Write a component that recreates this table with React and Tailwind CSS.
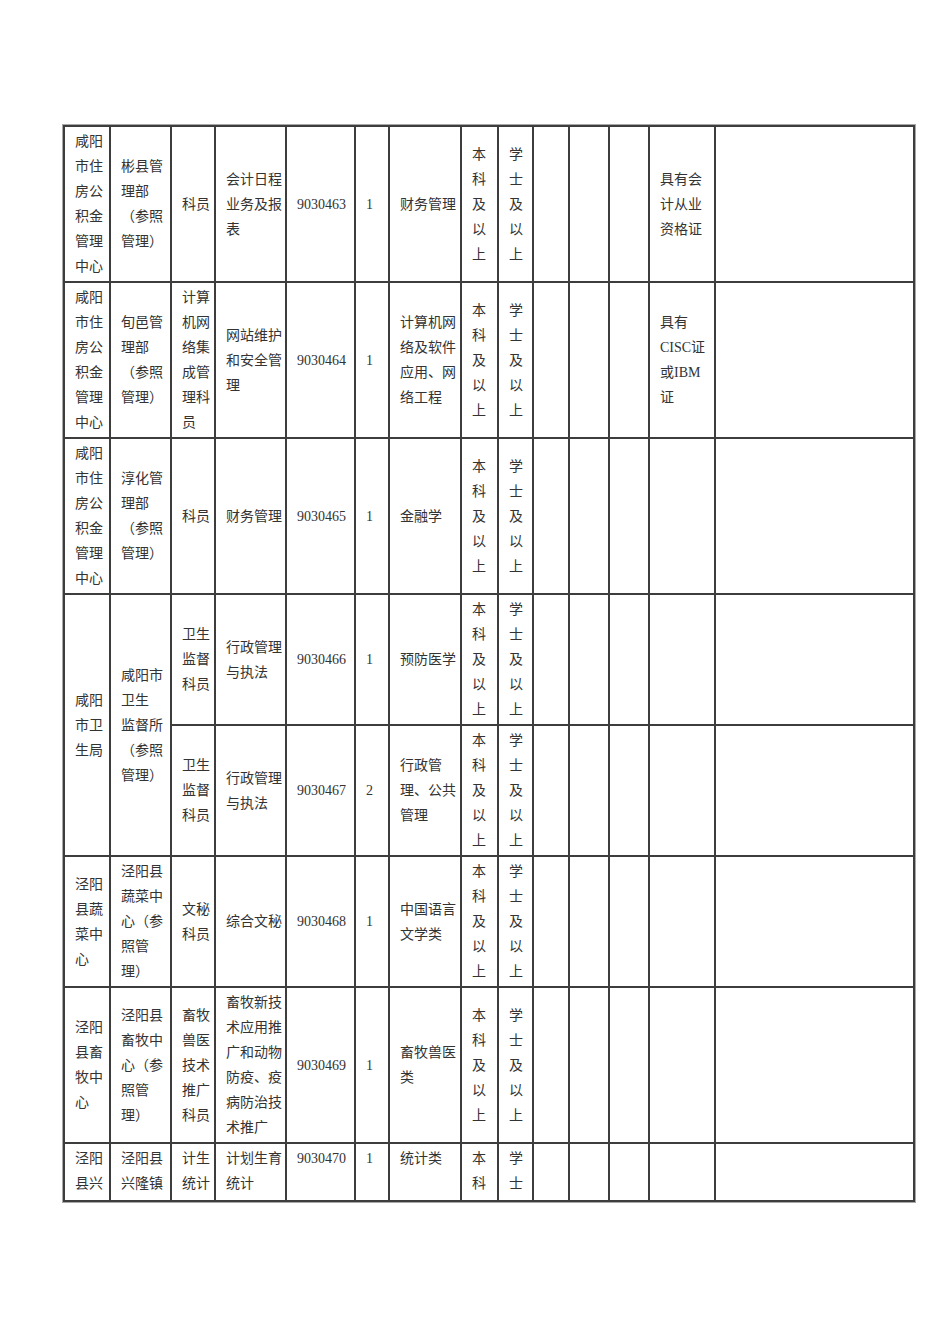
import React from 'react';

const cols = [46, 61, 44, 71, 69, 34, 72, 37, 35, 36, 40, 40, 66, 199];

const rows = [
  { org: '咸阳市住房公积金管理中心', unit: '彬县管理部（参照管理）', post: '科员', duty: '会计日程业务及报表', code: '9030463', num: '1', major: '财务管理', note: '具有会计从业资格证' },
  {
    org: '咸阳市住房公积金管理中心', unit: '旬邑管理部（参照管理）', post: '计算机网络集成管理科员', duty: '网站维护和安全管理', code: '9030464', num: '1', major: '计算机网络及软件应用、网络工程',
    note: (
      <>
        具有<br />CISC证<br />或IBM<br />证
      </>
    ),
  },
  { org: '咸阳市住房公积金管理中心', unit: '淳化管理部（参照管理）', post: '科员', duty: '财务管理', code: '9030465', num: '1', major: '金融学', note: '' },
];

const tail = [
  { org: '泾阳县蔬菜中心', unit: '泾阳县蔬菜中心（参照管理）', post: '文秘科员', duty: '综合文秘', code: '9030468', num: '1', major: '中国语言文学类', note: '' },
  { org: '泾阳县畜牧中心', unit: '泾阳县畜牧中心（参照管理）', post: '畜牧兽医技术推广科员', duty: '畜牧新技术应用推广和动物防疫、疫病防治技术推广', code: '9030469', num: '1', major: '畜牧兽医类', note: '' },
];

const td = 'border-2 border-[#3d3d3d] pl-[10px] pr-[2px] py-[2px] align-middle text-left break-all';
const top = 'border-2 border-[#3d3d3d] pl-[10px] pr-[2px] pt-[2px] pb-[4px] align-top text-left break-all';

function Edu() {
  return (
    <>
      <td className={td}>本科及以上</td>
      <td className={td}>学士及以上</td>
    </>
  );
}

function Blank({ note }) {
  return (
    <>
      <td className={td}></td>
      <td className={td}></td>
      <td className={td}></td>
      <td className={td}>{note}</td>
      <td className={td}></td>
    </>
  );
}

function Row({ r }) {
  return (
    <tr>
      <td className={td}>{r.org}</td>
      <td className={td}>{r.unit}</td>
      <td className={td}>{r.post}</td>
      <td className={td}>{r.duty}</td>
      <td className={td}>{r.code}</td>
      <td className={td}>{r.num}</td>
      <td className={td}>{r.major}</td>
      <Edu />
      <Blank note={r.note} />
    </tr>
  );
}

export default function App() {
  return (
    <div
      className="min-h-[1344px] w-[950px] bg-white pt-[124px] pl-[62px] text-[14px] leading-[25px] text-[#333]"
      style={{ fontFamily: '"Liberation Serif", "Noto Sans CJK SC", serif' }}
    >
      <div className="inline-block border border-[#a8a8a8]">
        <table className="table-fixed border-collapse w-[850px]" style={{ lineBreak: 'strict' }}>
          <colgroup>
            {cols.map((w, i) => (
              <col key={i} style={{ width: w }} />
            ))}
          </colgroup>
          <tbody>
            {rows.map((r) => (
              <Row key={r.code} r={r} />
            ))}
            <tr>
              <td className={td} rowSpan={2}>咸阳市卫生局</td>
              <td className={td} rowSpan={2}>咸阳市<br />卫生<br />监督所<br />（参照<br />管理）</td>
              <td className={td}>卫生监督科员</td>
              <td className={td}>行政管理与执法</td>
              <td className={td}>9030466</td>
              <td className={td}>1</td>
              <td className={td}>预防医学</td>
              <Edu />
              <Blank note="" />
            </tr>
            <tr>
              <td className={td}>卫生监督科员</td>
              <td className={td}>行政管理与执法</td>
              <td className={td}>9030467</td>
              <td className={td}>2</td>
              <td className={td}>行政管理、公共管理</td>
              <Edu />
              <Blank note="" />
            </tr>
            {tail.map((r) => (
              <Row key={r.code} r={r} />
            ))}
            <tr>
              <td className={top}>泾阳县兴</td>
              <td className={top}>泾阳县兴隆镇</td>
              <td className={top}>计生统计</td>
              <td className={top}>计划生育统计</td>
              <td className={top}>9030470</td>
              <td className={top}>1</td>
              <td className={top}>统计类</td>
              <td className={top}>本科</td>
              <td className={top}>学士</td>
              <td className={top}></td>
              <td className={top}></td>
              <td className={top}></td>
              <td className={top}></td>
              <td className={top}></td>
            </tr>
          </tbody>
        </table>
      </div>
    </div>
  );
}
